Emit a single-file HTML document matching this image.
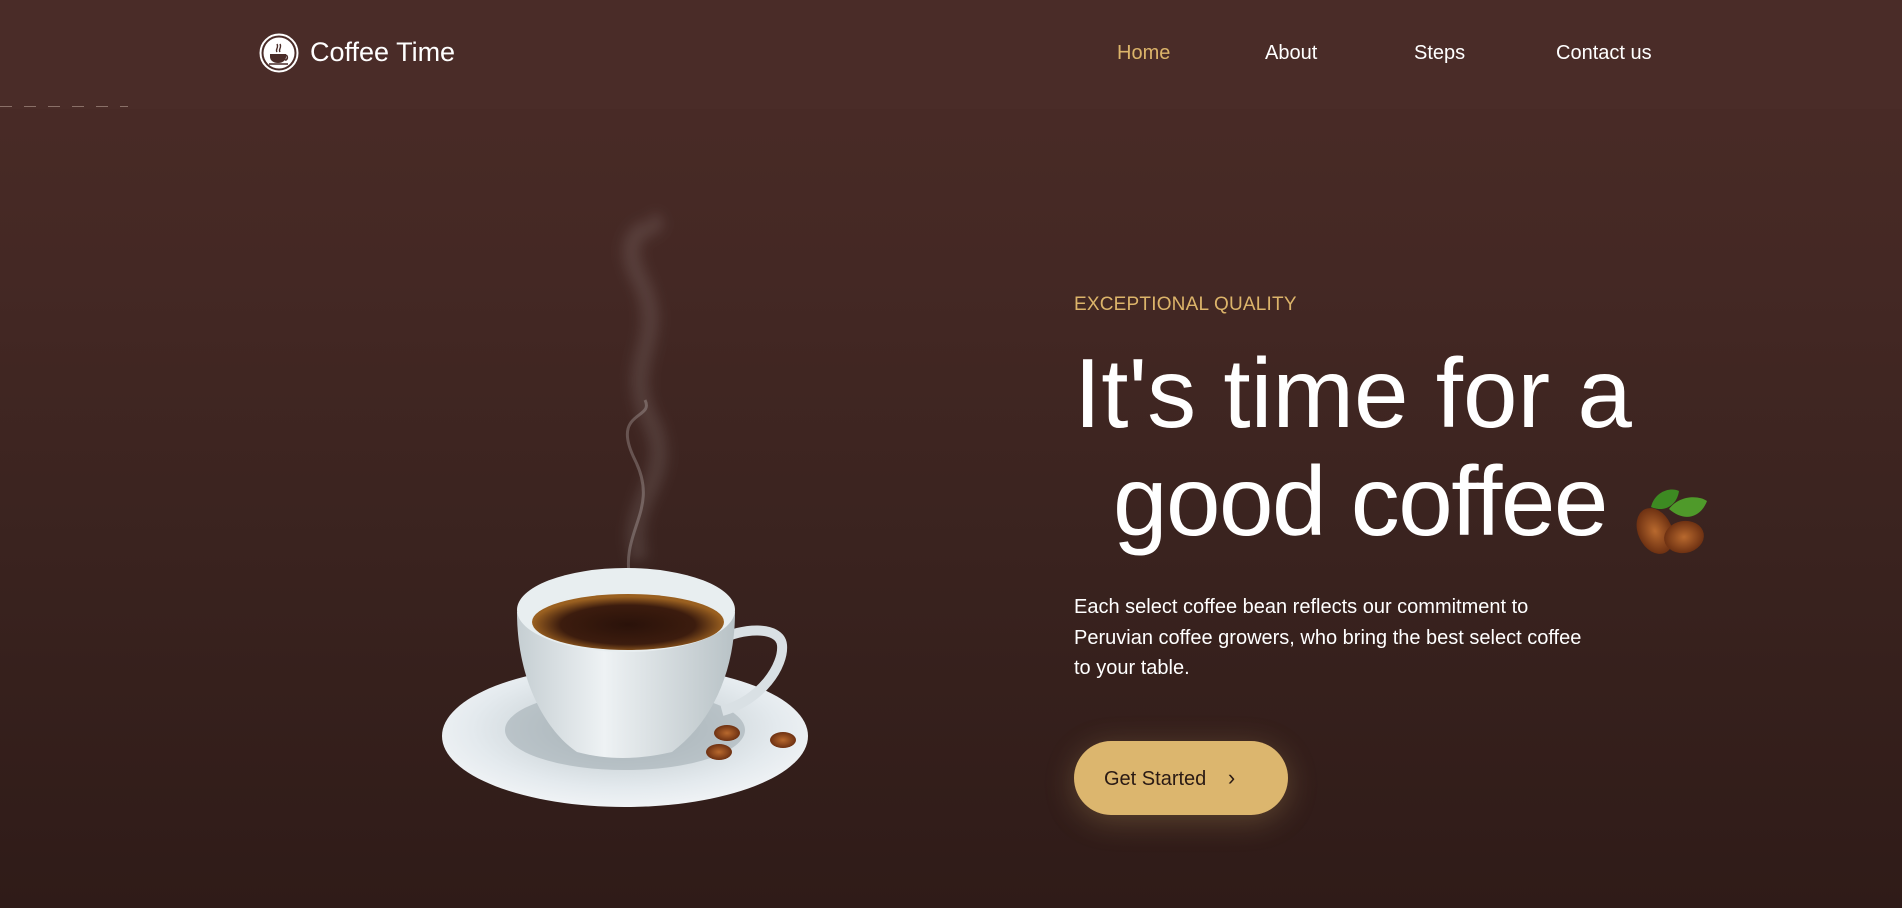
<!DOCTYPE html>
<html><head><meta charset="utf-8"><style>
*{margin:0;padding:0;box-sizing:border-box}
body{width:1902px;height:908px;overflow:hidden;position:relative;font-family:"Liberation Sans",sans-serif;background:linear-gradient(180deg,#4b2c27 0%,#442824 30%,#3a231f 60%,#2f1b18 100%)}
.hdr{position:absolute;left:0;top:0;width:1902px;height:109px;background:#4a2c28}
.dash{position:absolute;left:0;top:106px;width:128px;height:1px;background:repeating-linear-gradient(90deg,#8a7068 0 12px,transparent 12px 24px)}
.logo{position:absolute;left:259px;top:33px;width:40px;height:40px}
.brand{position:absolute;left:310px;top:37px;font-size:27px;color:#fff}
.nav{position:absolute;top:42px;font-size:20px;color:#fff}
.eq{position:absolute;left:1074px;top:294px;font-size:19px;color:#dcb46a;letter-spacing:.2px}
.h1{position:absolute;font-size:98px;color:#fff;line-height:1;white-space:nowrap}
.p{position:absolute;left:1074px;top:592px;width:510px;font-size:20px;line-height:30.5px;color:#fff}
.btn{position:absolute;left:1074px;top:741px;width:214px;height:74px;border-radius:37px;background:#dcb66e;box-shadow:0 6px 30px rgba(220,182,110,.25);color:#2a1a14;font-size:20px;line-height:74px;padding-left:30px}
</style></head><body>
<div class="hdr"></div>
<div class="dash"></div>
<svg class="logo" viewBox="0 0 40 40"><circle cx="20" cy="20" r="18.5" fill="none" stroke="#fff" stroke-width="2"/><circle cx="20" cy="20" r="15.5" fill="#fff"/><path d="M11 21h16v3a8 6 0 0 1-16 0z" fill="#4a2c28"/><path d="M27 22a3 3 0 0 1 0 5h-1" fill="none" stroke="#4a2c28" stroke-width="1.6"/><path d="M10 31h19" stroke="#4a2c28" stroke-width="1.6"/><path d="M18 19c-2-3 2-4 0-8M21 19c-2-3 2-4 0-8" fill="none" stroke="#4a2c28" stroke-width="1.4"/></svg>
<div class="brand">Coffee Time</div>
<div class="nav" style="left:1117px;color:#dcb46a">Home</div>
<div class="nav" style="left:1265px">About</div>
<div class="nav" style="left:1414px">Steps</div>
<div class="nav" style="left:1556px">Contact us</div>

<svg style="position:absolute;left:0;top:0" width="1902" height="908">
<defs>
<radialGradient id="sc" cx="50%" cy="45%" r="60%"><stop offset="0" stop-color="#b8c2c6"/><stop offset=".7" stop-color="#e4eaee"/><stop offset="1" stop-color="#f4f6f8"/></radialGradient>
<linearGradient id="cup" x1="0" x2="1"><stop offset="0" stop-color="#c5ced2"/><stop offset=".4" stop-color="#eef2f4"/><stop offset="1" stop-color="#b8c2c6"/></linearGradient>
<radialGradient id="cf" cx="50%" cy="55%"><stop offset="0" stop-color="#2a120a"/><stop offset=".7" stop-color="#3c1c0e"/><stop offset="1" stop-color="#9a6020"/></radialGradient>
<radialGradient id="bn"><stop offset="0" stop-color="#b8692e"/><stop offset="1" stop-color="#6e3112"/></radialGradient>
<filter id="bl" filterUnits="userSpaceOnUse" x="500" y="180" width="200" height="420"><feGaussianBlur stdDeviation="6"/></filter>
</defs>
<path d="M640 560c-20-60 40-80 10-140s20-80 -10-140 30-50 10-60" fill="none" stroke="rgba(255,255,255,.1)" stroke-width="18" filter="url(#bl)"/>
<path d="M630 580c-10-50 30-70 5-120s20-40 10-60" fill="none" stroke="rgba(255,255,255,.22)" stroke-width="3"/>
<ellipse cx="625" cy="736" rx="183" ry="71" fill="url(#sc)"/>
<ellipse cx="625" cy="730" rx="120" ry="40" fill="#9aa6ab" opacity=".5"/>
<path d="M720 640c20-12 60-15 62 5s-20 55-60 66" fill="none" stroke="#d9e0e4" stroke-width="10"/>
<path d="M517 612c0 70 30 120 60 140 30 8 60 8 95 0 40-30 63-80 63-140z" fill="url(#cup)"/>
<ellipse cx="626" cy="610" rx="109" ry="42" fill="#e8eef0"/>
<ellipse cx="628" cy="622" rx="96" ry="28" fill="url(#cf)"/>
<ellipse cx="727" cy="733" rx="13" ry="8" fill="url(#bn)"/>
<ellipse cx="719" cy="752" rx="13" ry="8" fill="url(#bn)"/>
<ellipse cx="783" cy="740" rx="13" ry="8" fill="url(#bn)"/>
<g transform="translate(1629,489)">
<path d="M40 20c10-14 30-14 38-8-6 16-22 22-38 8z" fill="#4f9a2a"/>
<path d="M22 18c4-16 20-20 28-16-2 14-14 22-28 16z" fill="#3d8a22"/>
<ellipse cx="26" cy="42" rx="17" ry="24" transform="rotate(-25 26 42)" fill="url(#bn)"/>
<ellipse cx="55" cy="48" rx="20" ry="16" transform="rotate(-10 55 48)" fill="url(#bn)"/>
</g>
</svg>

<div class="eq">EXCEPTIONAL QUALITY</div>
<div class="h1" style="left:1074px;top:344px">It's time for a</div>
<div class="h1" style="left:1113px;top:452px;letter-spacing:-1.5px">good coffee</div>
<div class="p">Each select coffee bean reflects our commitment to Peruvian coffee growers, who bring the best select coffee to your table.</div>
<div class="btn">Get Started <span style="margin-left:16px;font-size:22px">&#8250;</span></div>
</body></html>
